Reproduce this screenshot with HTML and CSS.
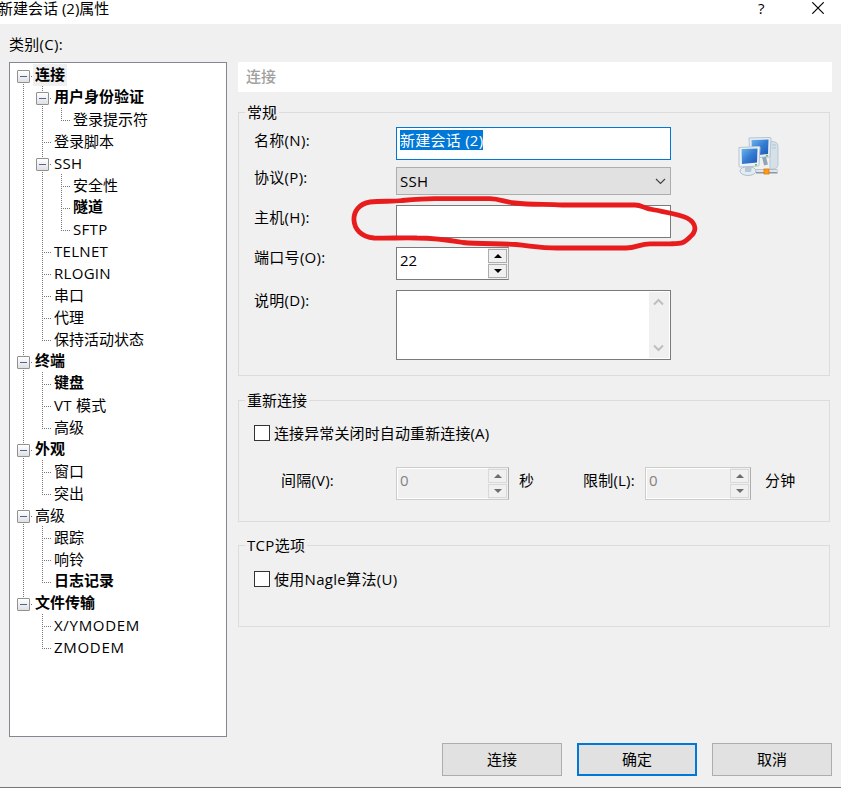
FILE: index.html
```html
<!DOCTYPE html>
<html lang="zh-CN">
<head>
    <meta charset="UTF-8">
    <title>新建会话 (2)属性</title>
    <link rel="stylesheet" href="styles.css">
</head>
<body>
    <div class="dialog">
        <div class="titlebar">
            <span class="title">新建会话 (2)属性</span>
            <span class="help">?</span>
            <svg class="close" width="12" height="12" viewBox="0 0 12 12"><path d="M0.3 0.3L11.7 11.7M11.7 0.3L0.3 11.7" fill="none" stroke="#000" stroke-width="1.2"/></svg>
        </div>

        <div class="content">
            <div class="sidebar">
                <div class="category">类别(C):</div>
                <ul class="tree">
                    <li><div class="node open bold"><span class="selected">连接</span></div>
                        <ul>
                            <li><div class="node open bold">用户身份验证</div>
                                <ul>
                                    <li><div class="node">登录提示符</div></li>
                                </ul>
                            </li>
                            <li><div class="node">登录脚本</div></li>
                            <li><div class="node open latin">SSH</div>
                                <ul>
                                    <li><div class="node">安全性</div></li>
                                    <li><div class="node bold">隧道</div></li>
                                    <li><div class="node latin">SFTP</div></li>
                                </ul>
                            </li>
                            <li><div class="node latin">TELNET</div></li>
                            <li><div class="node latin">RLOGIN</div></li>
                            <li><div class="node">串口</div></li>
                            <li><div class="node">代理</div></li>
                            <li><div class="node">保持活动状态</div></li>
                        </ul>
                    </li>
                    <li><div class="node open bold">终端</div>
                        <ul>
                            <li><div class="node bold">键盘</div></li>
                            <li><div class="node latin">VT 模式</div></li>
                            <li><div class="node">高级</div></li>
                        </ul>
                    </li>
                    <li><div class="node open bold">外观</div>
                        <ul>
                            <li><div class="node">窗口</div></li>
                            <li><div class="node">突出</div></li>
                        </ul>
                    </li>
                    <li><div class="node open">高级</div>
                        <ul>
                            <li><div class="node">跟踪</div></li>
                            <li><div class="node">响铃</div></li>
                            <li><div class="node bold">日志记录</div></li>
                        </ul>
                    </li>
                    <li><div class="node open bold">文件传输</div>
                        <ul>
                            <li><div class="node modem">X/YMODEM</div></li>
                            <li><div class="node modem">ZMODEM</div></li>
                        </ul>
                    </li>
                </ul>
            </div>

            <div class="panel">
                <div class="panel-title">连接</div>

                <fieldset class="general">
                    <legend>常规</legend>
                    <div class="fields">
                        <div class="field name">
                            <label>名称(N):</label>
                            <div class="box focused"><span class="selection">新建会话 (2)</span></div>
                        </div>
                        <div class="field protocol">
                            <label>协议(P):</label>
                            <div class="box select"><span class="latin">SSH</span>
                                <svg width="11" height="7" viewBox="0 0 11 7"><path d="M1 1L5.5 5.5L10 1" fill="none" stroke="#444" stroke-width="1.2"/></svg>
                            </div>
                        </div>
                        <div class="field host">
                            <label>主机(H):</label>
                            <div class="box"></div>
                        </div>
                        <div class="field port">
                            <label>端口号(O):</label>
                            <div class="spinner">
                                <span class="value">22</span>
                                <div class="arrows"><i class="up"></i><i class="down"></i></div>
                            </div>
                        </div>
                        <div class="field desc">
                            <label>说明(D):</label>
                            <div class="box area">
                                <div class="scroll">
                                    <svg width="11" height="8" viewBox="0 0 11 8"><path d="M1 6.5L5.5 2L10 6.5" fill="none" stroke="#bfbfbf" stroke-width="2"/></svg>
                                    <svg width="11" height="8" viewBox="0 0 11 8"><path d="M1 1.5L5.5 6L10 1.5" fill="none" stroke="#bfbfbf" stroke-width="2"/></svg>
                                </div>
                            </div>
                        </div>
                    </div>
                    <svg class="computers" width="42" height="42" viewBox="0 0 42 42">
                        <defs>
                            <linearGradient id="screen" x1="0" y1="0" x2="1" y2="1">
                                <stop offset="0" stop-color="#6fb5ec"/>
                                <stop offset="0.5" stop-color="#347dd2"/>
                                <stop offset="1" stop-color="#1f56b8"/>
                            </linearGradient>
                        </defs>
                        <path d="M32 4L37 5Q40 6 40 9V28Q40 31 36 32H32Z" fill="#d5e0e9" stroke="#b9c9d5"/>
                        <path d="M34 8H38M34 11H38" stroke="#b4c5d2"/>
                        <path d="M11 1L32 0.5Q33 0.5 33 2L32 19Q32 20 31 20L12 21Z" fill="#e6edf3" stroke="#b4c5d1"/>
                        <path d="M13.500 3L30.500 2.500L30 17L14 18.500Z" fill="url(#screen)"/>
                        <path d="M26 20L28 28" stroke="#8fa6b8" stroke-width="4"/>
                        <path d="M18 34.500H39.500" stroke="#8799a6" stroke-width="4"/>
                        <path d="M18 34H39.500" stroke="#dfe6eb" stroke-width="2"/>
                        <ellipse cx="10" cy="34" rx="8" ry="4.500" fill="#e4ebf1" stroke="#afc0cd"/>
                        <path d="M7 29H14L13 35H7Z" fill="#b7c7d3"/>
                        <path d="M1 10.500L21 9.500Q22 9.500 22 10.500L21 28Q21 29 20 29L2 30Q1 30 1 29Z" fill="#edf2f6" stroke="#b4c5d1"/>
                        <path d="M3.500 12L19.500 11.500L19 25.500L4 27Z" fill="url(#screen)"/>
                        <rect x="17" y="27" width="2" height="1.500" fill="#6bc04b"/>
                        <rect x="28" y="18" width="2" height="1.500" fill="#6bc04b"/>
                        <rect x="26" y="32" width="5" height="5" fill="#ff9d0a" stroke="#d87812" stroke-width="0.8"/>
                    </svg>
                </fieldset>

                <fieldset class="reconnect">
                    <legend>重新连接</legend>
                    <div class="check"><span class="checkbox"></span><span class="auto">连接异常关闭时自动重新连接(A)</span></div>
                    <div class="limits">
                        <label class="interval">间隔(V):</label>
                        <div class="spinner disabled">
                            <span class="value">0</span>
                            <div class="arrows"><i class="up"></i><i class="down"></i></div>
                        </div>
                        <label class="seconds">秒</label>
                        <label class="limit">限制(L):</label>
                        <div class="spinner disabled small">
                            <span class="value">0</span>
                            <div class="arrows"><i class="up"></i><i class="down"></i></div>
                        </div>
                        <label class="minutes">分钟</label>
                    </div>
                </fieldset>

                <fieldset class="tcp">
                    <legend class="latin">TCP选项</legend>
                    <div class="check"><span class="checkbox"></span><span class="latin">使用Nagle算法(U)</span></div>
                </fieldset>
            </div>
        </div>

        <div class="buttons">
            <button>连接</button>
            <button class="default">确定</button>
            <button>取消</button>
        </div>

        <!-- red marker around the host field -->
        <svg class="marker" width="350" height="60" viewBox="350 194 350 60">
            <path d="M370 202C382 200.500 392 202 402 200.500C414 199.500 424 198.700 435 198.700H490C500 199 505 202 515 203C530 205 545 204 562 205H635C642 205 643 208 650 209C664 212 680 214 687 218C698 224 696 232 690 237C683 244 681 243.500 670 243.800H650C640 244 636 248 626 248H557C540 248 532 246 516 244.500C498 243.500 478 244 463 242.500C448 240 434 238 417 238C402 237.500 388 238.500 374 238C348 236 348 205 370 202Z" fill="none" stroke="#e81c1c" stroke-width="4.800"/>
        </svg>
    </div>
</body>
</html>
```

FILE: styles.css
```css
* {
    box-sizing: border-box;
}
body {
    margin: 0;
    font-family: "Open Sans", "Noto Sans CJK SC", sans-serif;
    font-size: 15px;
    line-height: 20px;
    color: #000;
    overflow: hidden;
}
.dialog {
    position: relative;
    width: 841px;
    height: 788px;
    background: #f0f0f0;
    border-bottom: 1px solid #777;
}
.titlebar {
    display: flex;
    height: 24px;
    background: #fff;
    line-height: 17px;
}
.title {
    flex: 1;
    margin-left: -2px;
}
.help {
    width: 54px;
    line-height: 16px;
}
.close {
    margin: 2px 17px 0 0;
}
.content {
    display: flex;
    gap: 11px;
    height: 713px;
    padding: 10px 9px 0;
}
.sidebar {
    width: 218px;
}
.category {
    height: 28px;
    letter-spacing: 0.3px;
}
.tree {
    height: 675px;
    border: 1px solid #828790;
    background: #fff;
    padding: 1px 0 0 4px;
}
ul {
    list-style: none;
    margin: 0;
    padding: 0;
}
li {
    position: relative;
}
li ul {
    padding-left: 19px;
}
/* vertical dotted branch */
li::before {
    content: "";
    position: absolute;
    left: 9px;
    top: 0;
    bottom: 0;
    width: 1px;
    background: repeating-linear-gradient(#777 0 1px, transparent 1px 2px);
}
li:last-child::before {
    bottom: auto;
    height: 13px;
}
.tree > li:first-child::before {
    top: 12px;
}
.node {
    position: relative;
    height: 22px;
    padding-left: 21px;
    line-height: 23px;
    white-space: nowrap;
}
.node::before {
    content: "";
    position: absolute;
    left: 9px;
    top: 12px;
    width: 10px;
    height: 1px;
    background: repeating-linear-gradient(90deg, #777 0 1px, transparent 1px 2px);
}
.node.open::after {
    content: "";
    position: absolute;
    left: 4px;
    top: 7px;
    width: 11px;
    height: 11px;
    margin: -1px 0 0 -1px;
    border: 1px solid #919191;
    border-radius: 1px;
    background: linear-gradient(#4b63a7, #4b63a7) center / 7px 1px no-repeat, linear-gradient(#fff, #e0e0e0);
}
.node.bold {
    font-weight: bold;
    line-height: 21px;
}
.latin {
    letter-spacing: 0.3px;
}
.modem {
    letter-spacing: 0.7px;
}
.selected {
    display: inline-block;
    height: 22px;
    margin-left: -2px;
    padding: 0 2px;
    background: #f0f0f0;
}
.panel {
    width: 594px;
    padding-top: 28px;
}
.panel-title {
    height: 30px;
    padding: 4px 8px;
    margin-bottom: 10px;
    background: #fff;
    color: #a0a0a0;
    font-weight: 500;
}
fieldset {
    width: 592px;
    margin: 0 0 14px;
    border: 1px solid #dcdcdc;
    padding: 0 15px;
}
legend {
    margin-left: -9px;
    padding: 0 2px;
}
.general {
    display: flex;
    height: 274px;
    padding-top: 5px;
}
.fields {
    display: flex;
    flex-direction: column;
    width: 417px;
}
.field {
    display: flex;
    margin-bottom: 10px;
}
.field label {
    width: 142px;
    letter-spacing: 0.3px;
}
.name {
    margin-bottom: 7px;
}
.name label {
    padding-top: 3px;
}
.host {
    margin-bottom: 9px;
}
.host label {
    padding-top: 2px;
}
.box {
    width: 275px;
    height: 33px;
    border: 1px solid #7a7a7a;
    padding: 2px 3px;
    background: #fff;
}
.focused {
    border-color: #0078d7;
}
.selection {
    display: inline-block;
    height: 20px;
    background: #0078d7;
    color: #fff;
    letter-spacing: 0.25px;
}
.select {
    display: flex;
    justify-content: space-between;
    align-items: center;
    height: 28px;
    padding-right: 4px;
    border-color: #adadad;
    background: #e1e1e1;
}
.area {
    display: flex;
    justify-content: flex-end;
    height: 70px;
    padding: 1px;
}
.scroll {
    display: flex;
    flex-direction: column;
    justify-content: space-between;
    align-items: center;
    width: 20px;
    padding: 6px 2px 6px 0;
    background: #f0f0f0;
}
.spinner {
    display: flex;
    width: 113px;
    height: 33px;
    border: 1px solid #7a7a7a;
    border-right-color: #adadad;
    background: #fff;
}
.value {
    flex: 1;
    padding: 2px 3px;
}
.arrows {
    display: flex;
    flex-direction: column;
    gap: 1px;
    width: 20px;
    padding: 1px 1px 1px 0;
    background: #f0f0f0;
}
.arrows i {
    display: flex;
    flex: 1;
    justify-content: center;
    align-items: center;
    border: 1px solid #adadad;
    background: #f0f0f0;
}
.arrows i::before {
    content: "";
    border: 4px solid transparent;
    border-top-width: 0;
    border-bottom: 4px solid #000;
}
.arrows .down::before {
    transform: rotate(180deg);
}
.disabled {
    border-color: #ccc #adadad #ccc #ccc;
    background: #f0f0f0;
    box-shadow: inset 0 0 0 1px #fff;
    color: #838383;
}
.disabled .arrows i {
    border-color: #d9d9d9;
}
.disabled .arrows i::before {
    border-bottom-color: #6d6d6d;
}
.computers {
    margin: 10px 0 0 67px;
}
.reconnect {
    height: 132px;
    margin-bottom: 13px;
}
.check {
    display: flex;
    align-items: center;
    gap: 4px;
    padding-top: 13px;
}
.checkbox {
    width: 16px;
    height: 16px;
    border: 1px solid #333;
    background: #fff;
}
.auto {
    letter-spacing: 0.12px;
}
.limits {
    display: flex;
    margin-top: 24px;
}
.limits label {
    padding-top: 3px;
    letter-spacing: 0.2px;
}
.interval {
    width: 142px;
    padding-left: 27px;
}
.seconds {
    width: 74px;
    padding-left: 10px;
}
.limit {
    width: 62px;
}
.small {
    width: 106px;
}
.minutes {
    padding-left: 14px;
}
.tcp {
    height: 92px;
    margin-bottom: 0;
}
.tcp .check {
    padding-top: 14px;
}
.buttons {
    display: flex;
    justify-content: flex-end;
    gap: 15px;
    padding: 6px 9px 0 0;
}
button {
    width: 120px;
    height: 33px;
    padding: 0 0 2px;
    border: 1px solid #adadad;
    background: #e1e1e1;
    color: #000;
    font: inherit;
}
.default {
    border: 2px solid #0078d7;
}
.marker {
    position: absolute;
    left: 350px;
    top: 194px;
}
```
